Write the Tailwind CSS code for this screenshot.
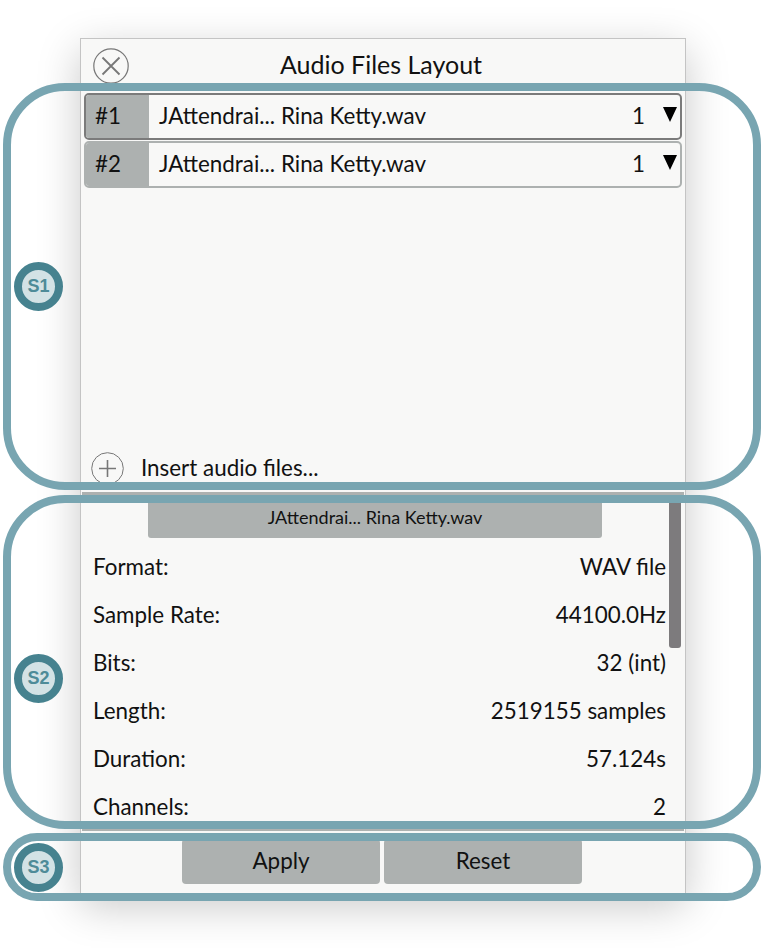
<!DOCTYPE html>
<html lang="en">
  <head>
    <meta charset="UTF-8" />
    <title>Audio Files Layout</title>
    <script src="https://cdn.jsdelivr.net/npm/@tailwindcss/browser@4"></script>
  </head>
  <body class="bg-white">
    <div class="relative w-[766px] h-[948px] overflow-hidden font-['Lato','Noto_Sans',sans-serif] text-[#111] text-[22.4px]">
      <!-- Window -->
      <div class="absolute left-[80px] top-[38px] w-[606px] h-[856px] bg-[#f8f8f7] border border-[#c4c4c4] shadow-[0_12px_40px_rgba(0,0,0,0.22)] flex flex-col">
        <!-- Title -->
        <div class="h-[54px] flex items-center relative shrink-0">
          <svg class="absolute left-[12px] top-[9px]" width="36" height="36" viewBox="0 0 36 36" fill="none" stroke="#777" stroke-width="1.2">
            <circle cx="18" cy="18" r="17.2" />
            <path d="M9.5 9.5 26.5 26.5M26.5 9.5 9.5 26.5" stroke-width="1.8" />
          </svg>
          <div class="w-[600px] text-center text-[25px] pb-[2px]">Audio Files Layout</div>
        </div>

        <!-- Section 1: file list -->
        <div class="h-[399px] shrink-0 flex flex-col px-[3px]">
          <div class="h-[47px] flex border-2 border-[#7b7b7b] rounded-[5px] overflow-hidden shrink-0">
            <div class="w-[63px] bg-[#adb1b0] flex items-center pl-[9px] pb-[2px]">#1</div>
            <div class="flex-1 flex items-center pl-[10px] pb-[2px]">JAttendrai... Rina Ketty.wav</div>
            <div class="flex items-center pr-[18px] pb-[2px]">1</div>
            <svg class="mr-[3px] mt-[12px]" width="14" height="15" viewBox="0 0 14 15"><path d="M0 0H14L7 15Z" fill="#000" /></svg>
          </div>
          <div class="h-[47px] mt-[1px] flex border-2 border-[#adb1b0] rounded-[5px] overflow-hidden shrink-0">
            <div class="w-[63px] bg-[#adb1b0] flex items-center pl-[9px] pb-[2px]">#2</div>
            <div class="flex-1 flex items-center pl-[10px] pb-[2px]">JAttendrai... Rina Ketty.wav</div>
            <div class="flex items-center pr-[18px] pb-[2px]">1</div>
            <svg class="mr-[3px] mt-[12px]" width="14" height="15" viewBox="0 0 14 15"><path d="M0 0H14L7 15Z" fill="#000" /></svg>
          </div>
          <div class="mt-auto mb-[7px] h-[34px] flex items-center pl-[7px] gap-[17px]">
            <svg width="33" height="33" viewBox="0 0 33 33" fill="none" stroke="#777" stroke-width="1">
              <circle cx="16.5" cy="16.5" r="15.8" />
              <path d="M8 16.5H25M16.5 8V25" stroke-width="1.6" />
            </svg>
            <span>Insert audio files...</span>
          </div>
        </div>

        <!-- Section 2: file details -->
        <div class="h-[339px] shrink-0 mx-[1px] border-y-3 border-[#adb1b0] relative">
          <div class="ml-[66px] w-[454px] h-[43px] bg-[#adb1b0] rounded-b-[3px] flex items-center justify-center text-[18px] pt-[1px]">JAttendrai... Rina Ketty.wav</div>
          <div class="absolute right-[3px] top-[5px] w-[12px] h-[148px] bg-[#7d7b7d] rounded-b-[3px]"></div>
          <div class="pl-[11px] pr-[18px] pt-[5px]">
            <div class="h-[48px] flex items-center justify-between"><span>Format:</span><span>WAV file</span></div>
            <div class="h-[48px] flex items-center justify-between"><span>Sample Rate:</span><span>44100.0Hz</span></div>
            <div class="h-[48px] flex items-center justify-between"><span>Bits:</span><span>32 (int)</span></div>
            <div class="h-[48px] flex items-center justify-between"><span>Length:</span><span>2519155 samples</span></div>
            <div class="h-[48px] flex items-center justify-between"><span>Duration:</span><span>57.124s</span></div>
            <div class="h-[48px] flex items-center justify-between"><span>Channels:</span><span>2</span></div>
          </div>
        </div>

        <!-- Section 3: actions -->
        <div class="flex justify-start gap-[4px] pl-[101px] pt-[8px]">
          <button class="w-[198px] h-[45px] bg-[#adb1b0] rounded-[4px] pb-[2px]">Apply</button>
          <button class="w-[198px] h-[45px] bg-[#adb1b0] rounded-[4px] pb-[2px]">Reset</button>
        </div>
      </div>

      <!-- Section callouts -->
      <div class="absolute left-[3px] top-[83px] w-[758px] h-[407px] border-[8px] border-[#78a5b1] rounded-[62px]"></div>
      <div class="absolute left-[3px] top-[495px] w-[758px] h-[334px] border-[8px] border-[#78a5b1] rounded-[62px]"></div>
      <div class="absolute left-[3px] top-[833px] w-[758px] h-[68px] border-[8px] border-[#78a5b1] rounded-[34px]"></div>

      <div class="absolute left-[14px] top-[262px] w-[49px] h-[49px] rounded-full border-[8px] border-[#46828f] bg-[#d3e2e5] flex items-center justify-center font-['Liberation_Sans',sans-serif] font-bold text-[18px] text-[#4e8b98]">S1</div>
      <div class="absolute left-[14px] top-[654px] w-[49px] h-[49px] rounded-full border-[8px] border-[#46828f] bg-[#d3e2e5] flex items-center justify-center font-['Liberation_Sans',sans-serif] font-bold text-[18px] text-[#4e8b98]">S2</div>
      <div class="absolute left-[14px] top-[843px] w-[49px] h-[49px] rounded-full border-[8px] border-[#46828f] bg-[#d3e2e5] flex items-center justify-center font-['Liberation_Sans',sans-serif] font-bold text-[18px] text-[#4e8b98]">S3</div>
    </div>
  </body>
</html>
